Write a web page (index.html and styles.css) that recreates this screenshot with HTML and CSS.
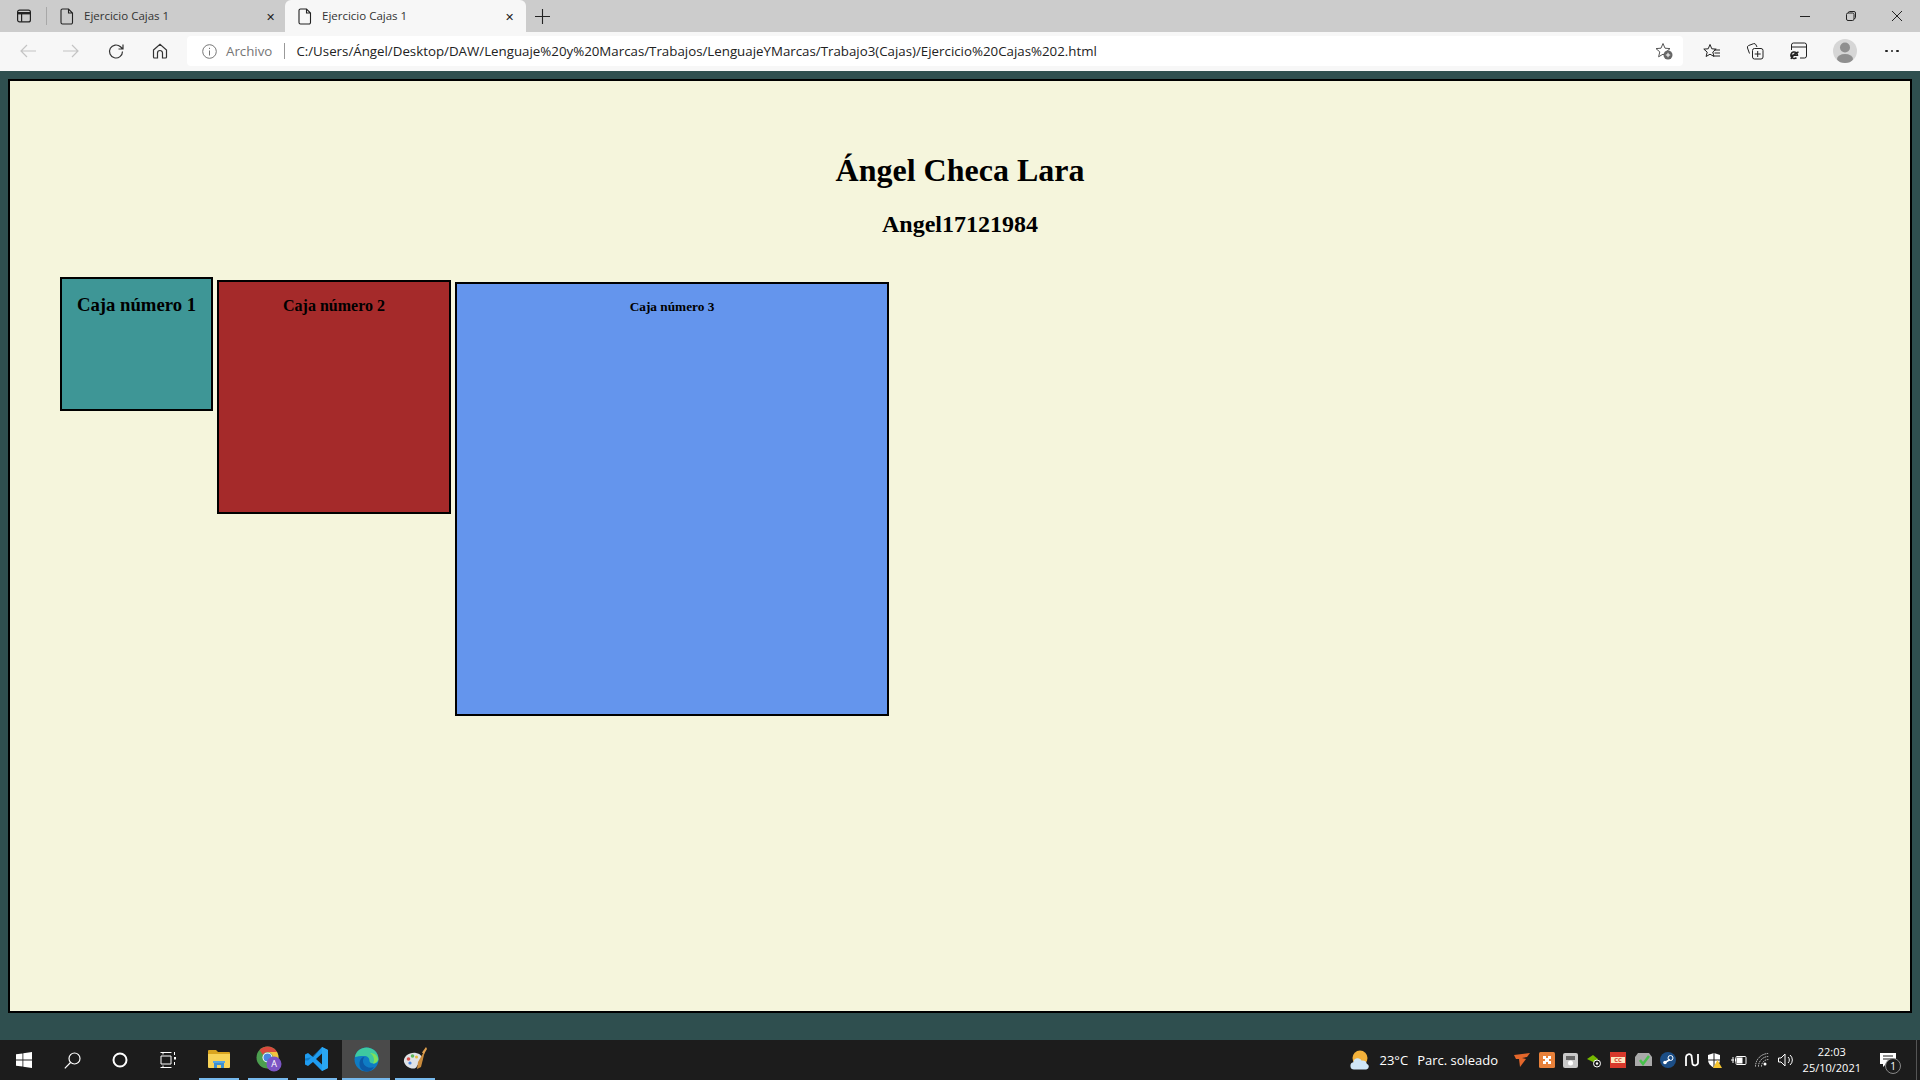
FILE: index.html
```html
<!DOCTYPE html>
<html lang="es">

<head>
    <meta charset="UTF-8">
    <title>Ejercicio Cajas 1</title>
    <link rel="stylesheet" href="styles.css">
</head>

<body>
    <!-- Browser title bar -->
    <div class="tabbar">
        <div class="tab-side">
            <svg width="16" height="16" viewBox="0 0 16 16" fill="none" stroke="#222" stroke-width="1.2"><rect x="1.6" y="2.1" width="12.8" height="11.8" rx="2"/><path d="M1.6 5.2h12.8" stroke-width="2.4"/><path d="M5.6 5v8.8"/></svg>
        </div>
        <div class="tab-sep"></div>
        <div class="tab tab-first">
            <svg class="tab-icon" width="14" height="17" viewBox="0 0 14 17" fill="none" stroke="#222" stroke-width="1.1"><path d="M2.5 1h6L12.5 5v9.5a1.5 1.5 0 0 1-1.500 1.500h-8.500a1.500 1.500 0 0 1-1.500-1.500V2.500A1.500 1.500 0 0 1 2.500 1zM8.500 1v4h4"/></svg>
            <span class="tab-title">Ejercicio Cajas 1</span>
            <span class="tab-close">&#x2715;</span>
        </div>
        <div class="tab tab-active">
            <svg class="tab-icon" width="14" height="17" viewBox="0 0 14 17" fill="none" stroke="#222" stroke-width="1.1"><path d="M2.5 1h6L12.5 5v9.5a1.5 1.5 0 0 1-1.500 1.500h-8.500a1.500 1.500 0 0 1-1.500-1.500V2.500A1.500 1.500 0 0 1 2.500 1zM8.500 1v4h4"/></svg>
            <span class="tab-title">Ejercicio Cajas 1</span>
            <span class="tab-close">&#x2715;</span>
        </div>
        <svg class="new-tab" width="15" height="15" viewBox="0 0 15 15" stroke="#222" stroke-width="1.1"><path d="M7.500 0v15M0 7.500h15"/></svg>
        <div class="win-controls">
            <svg class="win-btn" width="12" height="12" viewBox="0 0 12 12" stroke="#222"><path d="M1 6.500h10"/></svg>
            <svg class="win-btn" width="12" height="12" viewBox="0 0 12 12" fill="none" stroke="#222"><rect x="1.500" y="3" width="7.500" height="7.500" rx="1.500"/><path d="M3.500 3V2.500a1 1 0 0 1 1-1h4.500a1.500 1.500 0 0 1 1.500 1.500v4.500a1 1 0 0 1-1 1H9"/></svg>
            <svg class="win-btn" width="12" height="12" viewBox="0 0 12 12" stroke="#222"><path d="M1 1l10 10M11 1L1 11"/></svg>
        </div>
    </div>

    <!-- Browser toolbar -->
    <div class="toolbar">
        <svg class="nav-btn nav-back" width="16" height="14" viewBox="0 0 16 14" fill="none" stroke="#c4c4c4" stroke-width="1.200"><path d="M16 7H1M7 1L1 7l6 6"/></svg>
        <svg class="nav-btn nav-fwd" width="16" height="14" viewBox="0 0 16 14" fill="none" stroke="#c4c4c4" stroke-width="1.200"><path d="M0 7h15M9 1l6 6-6 6"/></svg>
        <svg class="nav-btn nav-reload" width="17" height="17" viewBox="0 0 17 17" fill="none" stroke="#333" stroke-width="1.200"><path d="M14.500 8.500a6.500 6.500 0 1 1-2-4.700L14.800 6M15 1.500V6h-4.500"/></svg>
        <svg class="nav-btn nav-home" width="16" height="16" viewBox="0 0 16 16" fill="none" stroke="#333" stroke-width="1.200"><path d="M1.500 7L8 1.200 14.500 7v7a1 1 0 0 1-1 1H10.500V10a2.500 2.500 0 0 0-5 0v5H2.500a1 1 0 0 1-1-1z"/></svg>
        <div class="address">
            <svg class="info-icon" width="15" height="15" viewBox="0 0 15 15" fill="none" stroke="#777"><circle cx="7.500" cy="7.500" r="6.800"/><path d="M7.500 6.500v5M7.500 3.800v1.200"/></svg>
            <span class="scheme">Archivo</span>
            <span class="addr-sep"></span>
            <span class="url">C:/Users/Ángel/Desktop/DAW/Lenguaje%20y%20Marcas/Trabajos/LenguajeYMarcas/Trabajo3(Cajas)/Ejercicio%20Cajas%202.html</span>
            <svg class="fav-add" width="18" height="18" viewBox="0 0 18 18"><path d="M8 1.500l2 4.700 5 .4-3.800 3.300 1.200 4.900L8 12.200l-4.400 2.600 1.200-4.900L1 6.600l5-.4z" fill="none" stroke="#555"/><circle cx="13" cy="13" r="4.500" fill="#666"/><path d="M13 10.800v4.400M10.800 13h4.400" stroke="#fff"/></svg>
        </div>
        <svg class="tool-btn tool-fav" width="18" height="17" viewBox="0 0 18 17" fill="none" stroke="#222"><path d="M7 1.500l1.800 4.300 4.400.3-3.400 2.900 1.100 4.400L7 11.200l-3.900 2.300 1.100-4.400L.8 6.100l4.400-.3zM11 7h6M11.500 10h5.500M10.500 13H17"/></svg>
        <svg class="tool-btn tool-coll" width="18" height="18" viewBox="0 0 18 18" fill="none" stroke="#222"><rect x="6.500" y="6.500" width="10.500" height="10.500" rx="2"/><path d="M11.700 9v6M8.700 12h6M3.500 11.500L1.500 6a2 2 0 0 1 1.200-2.500L7.500 1.700a2 2 0 0 1 2.500 1.200L11 5"/></svg>
        <svg class="tool-btn tool-ie" width="18" height="18" viewBox="0 0 18 18" fill="none" stroke="#222"><path d="M1.500 8V3a2 2 0 0 1 2-2h11a2 2 0 0 1 2 2v11a2 2 0 0 1-2 2H10M1.500 5h15"/><path d="M1 13.200h6.500a3.300 3.300 0 1 0-1 2.400M1 17c1.500-3 4-6 7.500-7" stroke-width="1.500"/></svg>
        <div class="avatar">
            <svg width="24" height="24" viewBox="0 0 24 24" fill="#8f8f8f"><circle cx="12" cy="8.500" r="5"/><ellipse cx="12" cy="20" rx="8" ry="5"/></svg>
        </div>
        <div class="more"><i></i><i></i><i></i></div>
    </div>

    <!-- The page itself -->
    <div class="page">
        <div class="sheet">
            <h1>Ángel Checa Lara</h1>
            <h2>Angel17121984</h2>
            <div class="boxes">
                <div class="box box-1">
                    <h3>Caja número 1</h3>
                </div>
                <div class="box box-2">
                    <h4>Caja número 2</h4>
                </div>
                <div class="box box-3">
                    <h5>Caja número 3</h5>
                </div>
            </div>
        </div>
    </div>

    <!-- Windows taskbar -->
    <div class="taskbar">
        <div class="task-btn">
            <svg width="16" height="16" viewBox="0 0 16 16" fill="#fff"><path d="M0 2.300l6.500-.9v6.200H0zM7.300 1.300L16 0v7.600H7.300zM0 8.400h6.500v6.200L0 13.700zM7.300 8.400H16V16l-8.700-1.300z"/></svg>
        </div>
        <div class="task-btn">
            <svg width="17" height="17" viewBox="0 0 17 17" fill="none" stroke="#fff" stroke-width="1.200"><circle cx="10.500" cy="6.500" r="5.500"/><path d="M6.500 10.500L.8 16.300"/></svg>
        </div>
        <div class="task-btn">
            <svg width="16" height="16" viewBox="0 0 16 16" fill="none" stroke="#fff" stroke-width="2"><circle cx="8" cy="8" r="6.500"/></svg>
        </div>
        <div class="task-btn">
            <svg width="16" height="16" viewBox="0 0 16 16" fill="none" stroke="#fff"><path d="M.5.500h11M.5 15.500h11M1 4h10v8H1zM3 .5v2M3 13.500v2"/><path d="M14 6h2M14 6.500h2" stroke-width="2"/><path d="M14.500 0v3M14.500 10v3"/></svg>
        </div>
        <div class="app app-first">
            <svg width="22" height="18" viewBox="0 0 22 18"><path d="M0 1a1 1 0 0 1 1-1h7l2 2h11a1 1 0 0 1 1 1v2H0z" fill="#d9a520"/><path d="M0 4h22v13a1 1 0 0 1-1 1H1a1 1 0 0 1-1-1z" fill="#f7d358"/><path d="M6 18v-5h10v5h-3v-3H9v3z" fill="#3d8fd1"/><path d="M5 11h12v2H5z" fill="#57a7e0"/></svg>
        </div>
        <div class="app">
            <svg class="app-chrome" width="26" height="26" viewBox="0 0 26 26"><circle cx="11.500" cy="11.500" r="11" fill="#4c9e4f"/><path d="M11.500.5A11 11 0 0 1 21 6H11.500A5.500 5.500 0 0 0 6.800 8.800L3.500 4A11 11 0 0 1 11.500.5z" fill="#d94a3d"/><path d="M21 6a11 11 0 0 1-9.500 16.500L16.200 14.300A5.500 5.500 0 0 0 11.500 6z" fill="#f3c33d"/><circle cx="11.500" cy="11.500" r="5" fill="#fff"/><circle cx="11.500" cy="11.500" r="4" fill="#4a86e0"/><circle cx="18" cy="18" r="7.500" fill="#7c55c4"/><text class="badge-a" x="18" y="21">A</text></svg>
        </div>
        <div class="app">
            <svg width="24" height="24" viewBox="0 0 24 24"><path d="M17 0l6 3v18l-6 3-9-9-5 4-3-1.500V7.500L3 6l5 4zM17 6.500L11 12l6 5.500z" fill="#1f9cf0" fill-rule="evenodd"/><path d="M17 0l6 3v18l-6 3z" fill="#2aa7f3"/><path d="M17 0L3 13.500l-3 0V11.500L8 10z" fill="#0a6fb8" opacity=".7"/></svg>
        </div>
        <div class="app app-edge">
            <svg width="25" height="25" viewBox="0 0 25 25"><circle cx="12.500" cy="12.500" r="12" fill="#0f7cc4"/><path d="M1 10C2 4 7 .5 12.500.5 19 .5 24.500 5.500 24.500 12c0 2.500-2 4.500-5 4.500-2.500 0-4-1-4-2.500 0-3-2-5-5.500-5C6 9 3 9.500 1 10z" fill="#3ec9a0"/><path d="M13 24.500C8 24.500 5 21 5.500 15.500 6 12 8 10 10.500 10 8.500 12 8.500 15 10 17.500c2 3 6 4 10 2.500-1.500 2.500-4 4.500-7 4.500z" fill="#0c5aa6"/><path d="M16 6c4 0 7 2 8 6 0 2-2 4.500-5 4.500 2-3 1-8-3-10.500z" fill="#7fe05a"/></svg>
        </div>
        <div class="app">
            <svg width="24" height="25" viewBox="0 0 24 25"><path d="M1 15C0 9 7 5 13 6c5 1 7 4 6 8-1 3-4 3-5 5-1 3-4 3-7 2-3-1-5-3-6-6z" fill="#dfe3e6"/><circle cx="5.500" cy="12" r="1.800" fill="#d9534f"/><circle cx="9.500" cy="9" r="1.800" fill="#5cb85c"/><circle cx="13.500" cy="10" r="1.500" fill="#e8b93c"/><circle cx="7" cy="16" r="1.600" fill="#4a86e0"/><path d="M23 1l-8 14-1 7 4-2 3-12z" fill="#c98b3c"/><path d="M23 0l1 2-3 5-2-1.500z" fill="#e0a050"/></svg>
        </div>

        <div class="weather">
            <svg width="20" height="20" viewBox="0 0 20 20"><circle cx="10" cy="8" r="7.500" fill="#f3b13a"/><path d="M4 19.500a3.700 3.700 0 0 1-.7-7.300 4.500 4.500 0 0 1 8.500-1.500 4 4 0 0 1 5 3 3 3 0 0 1-.5 5.800z" fill="#cfe6f7"/></svg>
            <span class="temp">23°C</span>
            <span class="forecast">Parc. soleado</span>
        </div>

        <div class="tray">
            <svg width="16" height="14" viewBox="0 0 16 14"><path d="M0 2l16-2-3 4-5 1 4 1-6 8-1-8H2z" fill="#e4672b"/></svg>
            <svg width="16" height="16" viewBox="0 0 16 16"><rect width="16" height="16" rx="1.500" fill="#e8813a"/><path d="M4 4h3v2h2V4h3v3h-2v2h2v3H9v-2H7v2H4V9h2V7H4z" fill="#fff"/></svg>
            <svg width="15" height="15" viewBox="0 0 15 15"><rect width="15" height="15" rx="2" fill="#c9c9c9"/><rect x="3" y="3" width="9" height="4" fill="#666"/><circle cx="7.500" cy="10" r="2.500" fill="#fff"/></svg>
            <svg width="15" height="15" viewBox="0 0 15 15"><path d="M0 6l6-4 5 4-3 4z" fill="#76b900"/><circle cx="10" cy="10.500" r="3.500" fill="#1c1c1c" stroke="#fff"/><circle cx="10" cy="10.500" r="1.200" fill="#fff"/></svg>
            <svg width="16" height="16" viewBox="0 0 16 16"><rect width="16" height="16" fill="#d8392b"/><rect x="1" y="5" width="14" height="6" fill="#fbe7c0"/><text class="tray-cc" x="8" y="10">CC</text></svg>
            <svg width="17" height="14" viewBox="0 0 17 14"><path d="M0 4l3-4h11l3 4v9H0z" fill="#a9a9a9"/><path d="M5 7l3 4 6-8" fill="none" stroke="#46c24a" stroke-width="2.500"/></svg>
            <svg width="16" height="16" viewBox="0 0 16 16"><circle cx="8" cy="8" r="8" fill="#1c4e86"/><circle cx="10.500" cy="6" r="2.500" fill="none" stroke="#fff"/><circle cx="5" cy="10.500" r="1.800" fill="#fff"/><path d="M5 10.500l5-3" stroke="#fff" stroke-width="1.500"/></svg>
            <svg width="14" height="14" viewBox="0 0 14 14" fill="none" stroke="#fff" stroke-width="1.800"><path d="M1 13V4a3 3 0 0 1 5.500-1.500L7.500 11a3 3 0 0 0 5.500-1V1"/></svg>
            <svg width="15" height="15" viewBox="0 0 15 15"><path d="M7 0l6 2v5c0 3-2.500 6-6 8-3.500-2-6-5-6-8V2z" fill="#fff"/><path d="M7 0v15M1 7h12" stroke="#1c1c1c"/><path d="M10.500 7l4.500 8H6z" fill="#f4c430"/></svg>
            <svg width="16" height="12" viewBox="0 0 16 12" fill="none" stroke="#fff"><rect x="5" y="2.500" width="10" height="8" rx="1"/><rect x="6.500" y="4" width="4.500" height="5" fill="#fff"/><path d="M0 6h3M2 3v6M4.500 4.500V7.500"/></svg>
            <svg width="14" height="14" viewBox="0 0 14 14" fill="none" stroke="#cfcfcf"><path d="M.5 13.500A13 13 0 0 1 13.500.5M3.500 13.500A10 10 0 0 1 13.500 3.500M6.500 13.500A7 7 0 0 1 13.500 6.500" stroke-dasharray="1.500 .8"/><circle cx="10" cy="11" r="1.500" fill="#fff" stroke="none"/></svg>
            <svg width="16" height="14" viewBox="0 0 16 14" fill="none" stroke="#fff"><path d="M.5 5h2.500L7 1v12L3 9H.5zM10 4a4 4 0 0 1 0 6M12 2a6.500 6.500 0 0 1 0 10"/></svg>
        </div>

        <div class="clock">
            <span>22:03</span>
            <span>25/10/2021</span>
        </div>

        <div class="notify">
            <svg width="16" height="14" viewBox="0 0 16 14"><path d="M0 0h16v11H6l-3 3v-3H0z" fill="#fff"/><path d="M3 3h10M3 6h10" stroke="#1c1c1c"/></svg>
            <span class="notify-count">1</span>
        </div>
        <div class="show-desktop"></div>
    </div>
</body>

</html>
```

FILE: styles.css
```css
body {
    display: flex;
    flex-direction: column;
    width: 1920px;
    height: 1080px;
    margin: 0;
    overflow: hidden;
    background-color: #2f4f4f;
    font-family: "Open Sans", "Noto Sans", sans-serif;
}

svg {
    display: block;
    flex: none;
}

/* browser tabs */
.tabbar {
    display: flex;
    align-items: center;
    height: 32px;
    background-color: #cccccc;
}

.tab-side {
    display: flex;
    justify-content: center;
    width: 46px;
    padding-left: 1px;
    box-sizing: border-box;
}

.tab-sep {
    width: 1px;
    height: 18px;
    background-color: #a8a8a8;
}

.tab {
    display: flex;
    align-items: center;
    width: 241px;
    height: 32px;
    box-sizing: border-box;
    padding: 0 12px 0 13px;
    font-size: 11.5px;
    color: #333;
}

.tab-first {
    width: 238px;
    padding-right: 10px;
}

.tab-active {
    background-color: #f7f7f7;
    border-radius: 6px 6px 0 0;
}

.tab-icon {
    margin-right: 10px;
}

.tab-title {
    flex: 1;
    margin-top: -2px;
}

.tab-close {
    font-size: 11px;
    color: #222;
}

.new-tab {
    margin-left: 9px;
}

.win-controls {
    display: flex;
    gap: 34px;
    margin-left: auto;
    padding-right: 17px;
}

/* browser toolbar */
.toolbar {
    display: flex;
    align-items: center;
    height: 39px;
    box-sizing: border-box;
    padding-bottom: 1px;
    background-color: #f7f7f7;
}

.nav-back {
    margin-left: 20px;
}

.nav-fwd {
    margin-left: 27px;
}

.nav-reload {
    margin-left: 29px;
}

.nav-home {
    margin-left: 27px;
}

.address {
    display: flex;
    align-items: center;
    width: 1496px;
    height: 30px;
    margin-left: 19px;
    border-radius: 4px;
    background-color: #fff;
    font-size: 13.3px;
    color: #222;
}

.info-icon {
    margin-left: 15px;
}

.scheme {
    margin-left: 9px;
    color: #767676;
}

.addr-sep {
    width: 1px;
    height: 16px;
    margin: 0 11px 0 12px;
    background-color: #999;
}

.fav-add {
    margin-left: auto;
    margin-right: 10px;
}

.tool-fav {
    margin-left: 20px;
}

.tool-coll {
    margin-left: 25px;
}

.tool-ie {
    margin-left: 26px;
}

.avatar {
    display: flex;
    align-items: center;
    justify-content: center;
    width: 24px;
    height: 24px;
    margin-left: 25px;
    border-radius: 50%;
    background-color: #d6d6d6;
    overflow: hidden;
}

.more {
    display: flex;
    gap: 3px;
    margin-left: 28px;
}

.more i {
    width: 2.500px;
    height: 2.500px;
    border-radius: 50%;
    background-color: #222;
}

/* page content */
.page {
    flex: 1;
    display: flex;
    padding: 8px 8px 27px;
    min-height: 0;
}

.sheet {
    flex: 1;
    border: 2px solid #000;
    background-color: #f5f5dc;
    font-family: "Liberation Serif", serif;
    color: #000;
}

h1 {
    margin: 0;
    padding-top: 71px;
    font-size: 32px;
    text-align: center;
}

h2 {
    margin: 22px 0 0;
    font-size: 24px;
    text-align: center;
}

.boxes {
    display: flex;
    align-items: baseline;
    gap: 4px;
    margin: 39px 0 0 50px;
}

.box {
    flex: none;
    box-sizing: border-box;
    border: 2px solid #000;
    text-align: center;
}

.box-1 {
    width: 153px;
    height: 134px;
    background-color: #3e9696;
}

.box-2 {
    width: 234px;
    height: 234px;
    background-color: #a52a2a;
}

.box-3 {
    width: 434px;
    height: 434px;
    background-color: #6495ed;
}

h3 {
    margin: 15px 0 0;
    font-size: 18.720px;
}

h4 {
    margin: 15px 0 0;
    font-size: 16px;
}

h5 {
    margin: 15px 0 0;
    font-size: 13.300px;
}

/* windows taskbar */
.taskbar {
    position: relative;
    display: flex;
    align-items: center;
    height: 40px;
    background-color: #1c1c1c;
    color: #fff;
    font-size: 13px;
}

.task-btn {
    display: flex;
    align-items: center;
    justify-content: center;
    width: 48px;
    height: 40px;
}

.app {
    display: flex;
    align-items: center;
    justify-content: center;
    box-sizing: border-box;
    width: 40px;
    height: 40px;
    margin-right: 9px;
    border-bottom: 2px solid #76b9ed;
}

.app-first {
    margin-left: 7px;
}

.app-chrome {
    margin-left: 2px;
}

.app-edge {
    width: 48px;
    margin-left: -4px;
    margin-right: 5px;
    background-color: #4a4a4a;
}

.badge-a {
    font-family: "Open Sans", sans-serif;
    font-size: 9px;
    fill: #fff;
    text-anchor: middle;
}

.tray-cc {
    font-family: "Open Sans", sans-serif;
    font-size: 6px;
    font-weight: 700;
    fill: #d8392b;
    text-anchor: middle;
}

.weather {
    display: flex;
    align-items: center;
    margin-left: auto;
}

.temp {
    margin-left: 10px;
}

.forecast {
    margin-left: 9px;
}

.tray {
    display: flex;
    align-items: center;
    gap: 8.500px;
    margin-left: 16px;
}

.clock {
    display: flex;
    flex-direction: column;
    align-items: center;
    margin-left: 9px;
    font-size: 11px;
    line-height: 16px;
}

.notify {
    position: relative;
    margin-left: 19px;
    margin-right: 20px;
}

.notify-count {
    position: absolute;
    right: -5px;
    bottom: -7px;
    width: 14px;
    height: 14px;
    border: 1px solid #888;
    border-radius: 50%;
    background-color: #1c1c1c;
    font-size: 10px;
    line-height: 14px;
    text-align: center;
}

.show-desktop {
    width: 1px;
    height: 40px;
    margin-right: 3px;
    background-color: #555;
}
```
